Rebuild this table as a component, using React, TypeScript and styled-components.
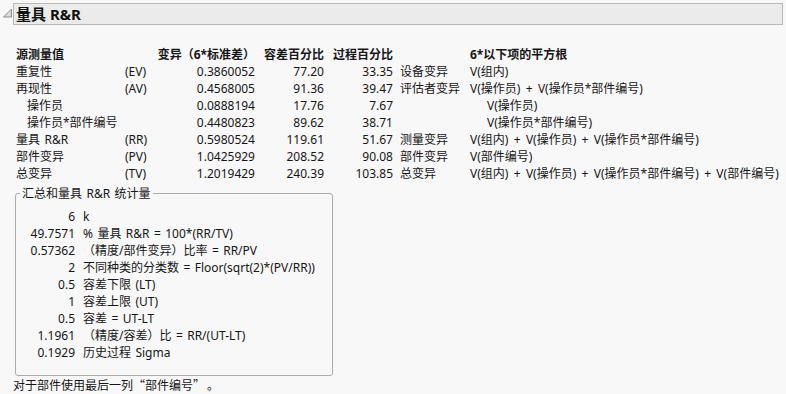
import React from "react";
import styled, { createGlobalStyle } from "styled-components";

const GlobalStyle = createGlobalStyle`
  html, body { margin: 0; padding: 0; background: #f8f8f8; }
  body {
    font-family: "Noto Sans", "Noto Sans CJK SC", sans-serif;
    font-size: 12px;
    color: #161616;
    word-spacing: 1.3px;
  }
`;

const Page = styled.div`
  width: 786px;
  height: 394px;
  overflow: hidden;
  background: #f8f8f8;
`;

const OutlineHeader = styled.div`
  display: flex;
  align-items: flex-start;
  padding-top: 3px;
`;

const Toggle = styled.svg`
  flex: 0 0 13px;
  width: 13px;
  height: 22px;
  display: block;
`;

const TitleBox = styled.div`
  flex: 0 0 770px;
  box-sizing: border-box;
  height: 22px;
  border: 1px solid #b9b9b9;
  background: #ebebeb;
  padding-left: 2px;
  font-size: 15px;
  font-weight: 700;
  line-height: 20px;
  color: #111;
  word-spacing: 0;
`;

const Content = styled.div`
  padding: 20.5px 0 0 13px;
`;

const Table = styled.div`
  display: flex;
  flex-direction: column;
  margin-left: 3px;
`;

const Row = styled.div<{ $head?: boolean }>`
  display: grid;
  grid-template-columns: 109px 30px 100px 69px 69px 77px auto;
  height: 17px;
  line-height: 17px;
  white-space: nowrap;
  font-weight: ${(p) => (p.$head ? 700 : 400)};
`;

const Label = styled.div<{ $indent?: boolean }>`
  padding-left: ${(p) => (p.$indent ? "11px" : "0")};
`;

const Abbr = styled.div``;

const Num = styled.div`
  text-align: right;
`;

const Source = styled.div`
  padding-left: 7px;
`;

const Formula = styled.div<{ $indent?: boolean }>`
  padding-left: ${(p) => (p.$indent ? "17px" : "0")};
  word-spacing: 2.2px;
`;

const Group = styled.fieldset`
  box-sizing: border-box;
  width: 318px;
  margin: 3px 0 0 2px;
  padding: 6px 0 14px 0;
  border: 1px solid #ababab;
  border-radius: 3px;
  min-inline-size: 0;
`;

const Legend = styled.legend`
  margin-left: 4px;
  padding: 0 2px;
  line-height: 17px;
  font-size: 12px;
`;

const StatRow = styled.div`
  display: grid;
  grid-template-columns: 59px auto;
  column-gap: 8px;
  height: 17px;
  line-height: 17px;
  white-space: nowrap;
`;

const StatValue = styled.div`
  text-align: right;
`;

const StatText = styled.div``;

const Footer = styled.div`
  line-height: 17px;
  white-space: nowrap;
`;

const Quote = styled.span<{ $open?: boolean }>`
  font-family: "Noto Sans CJK SC", sans-serif;
  display: inline-block;
  width: 12px;
  text-align: ${(p) => (p.$open ? "right" : "left")};
`;

const Stop = styled.span`
  font-family: "Noto Sans CJK SC", sans-serif;
  display: inline-block;
  width: 12px;
  padding-left: 2px;
`;

type R = {
  label: string;
  abbr?: string;
  v: string;
  t: string;
  p: string;
  s?: string;
  f: string;
  sub?: boolean;
};

const rows: R[] = [
  { label: "重复性", abbr: "(EV)", v: "0.3860052", t: "77.20", p: "33.35", s: "设备变异", f: "V(组内)" },
  { label: "再现性", abbr: "(AV)", v: "0.4568005", t: "91.36", p: "39.47", s: "评估者变异", f: "V(操作员) + V(操作员*部件编号)" },
  { label: "操作员", v: "0.0888194", t: "17.76", p: "7.67", f: "V(操作员)", sub: true },
  { label: "操作员*部件编号", v: "0.4480823", t: "89.62", p: "38.71", f: "V(操作员*部件编号)", sub: true },
  { label: "量具 R&R", abbr: "(RR)", v: "0.5980524", t: "119.61", p: "51.67", s: "测量变异", f: "V(组内) + V(操作员) + V(操作员*部件编号)" },
  { label: "部件变异", abbr: "(PV)", v: "1.0425929", t: "208.52", p: "90.08", s: "部件变异", f: "V(部件编号)" },
  { label: "总变异", abbr: "(TV)", v: "1.2019429", t: "240.39", p: "103.85", s: "总变异", f: "V(组内) + V(操作员) + V(操作员*部件编号) + V(部件编号)" },
];

const stats: [string, string][] = [
  ["6", "k"],
  ["49.7571", "% 量具 R&R = 100*(RR/TV)"],
  ["0.57362", "（精度/部件变异）比率 = RR/PV"],
  ["2", "不同种类的分类数 = Floor(sqrt(2)*(PV/RR))"],
  ["0.5", "容差下限 (LT)"],
  ["1", "容差上限 (UT)"],
  ["0.5", "容差 = UT-LT"],
  ["1.1961", "（精度/容差）比 = RR/(UT-LT)"],
  ["0.1929", "历史过程 Sigma"],
];

export default function App() {
  return (
    <Page>
      <GlobalStyle />
      <OutlineHeader>
        <Toggle viewBox="0 0 13 22">
          <polygon points="11.5,6 11.5,14 3.5,14" fill="#dcdcdc" stroke="#8e8e8e" strokeWidth="1" />
        </Toggle>
        <TitleBox>量具 R&amp;R</TitleBox>
      </OutlineHeader>
      <Content>
        <Table>
          <Row $head>
            <Label>源测量值</Label>
            <Abbr />
            <Num>变异（6*标准差）</Num>
            <Num>容差百分比</Num>
            <Num>过程百分比</Num>
            <Source />
            <Formula>6*以下项的平方根</Formula>
          </Row>
          {rows.map((r) => (
            <Row key={r.label}>
              <Label $indent={r.sub}>{r.label}</Label>
              <Abbr>{r.abbr ?? ""}</Abbr>
              <Num>{r.v}</Num>
              <Num>{r.t}</Num>
              <Num>{r.p}</Num>
              <Source>{r.s ?? ""}</Source>
              <Formula $indent={r.sub}>{r.f}</Formula>
            </Row>
          ))}
        </Table>
        <Group>
          <Legend>汇总和量具 R&amp;R 统计量</Legend>
          {stats.map(([v, t]) => (
            <StatRow key={t}>
              <StatValue>{v}</StatValue>
              <StatText>{t}</StatText>
            </StatRow>
          ))}
        </Group>
        <Footer>
          对于部件使用最后一列<Quote $open>“</Quote>部件编号<Quote>”</Quote>
          <Stop>。</Stop>
        </Footer>
      </Content>
    </Page>
  );
}
